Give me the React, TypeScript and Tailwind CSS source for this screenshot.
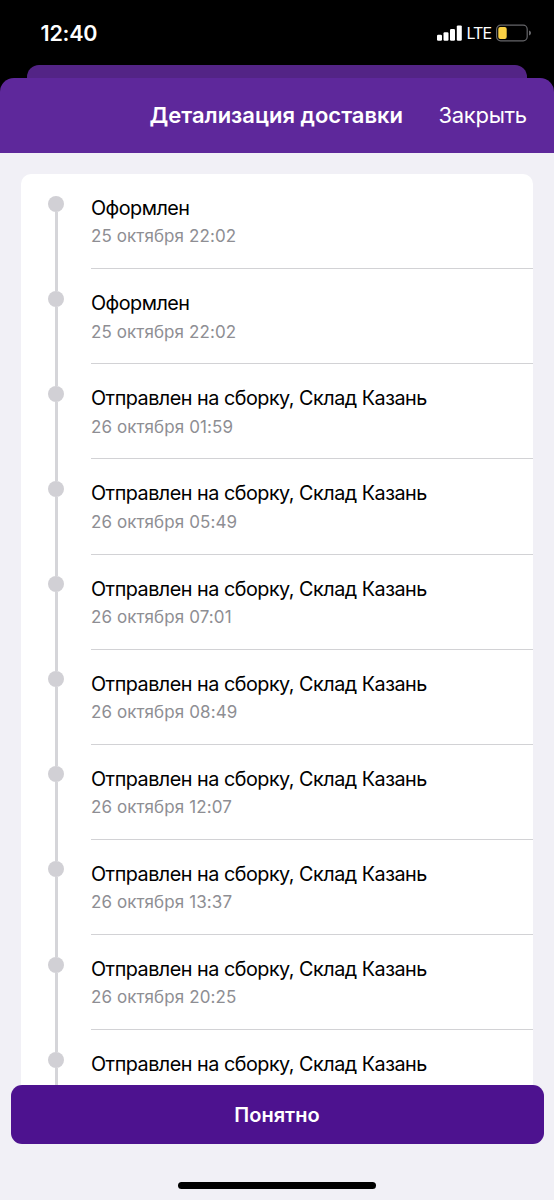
const steps = [
    { title: "Оформлен", date: "25 октября 22:02" },
    { title: "Оформлен", date: "25 октября 22:02" },
    { title: "Отправлен на сборку, Склад Казань", date: "26 октября 01:59" },
    { title: "Отправлен на сборку, Склад Казань", date: "26 октября 05:49" },
    { title: "Отправлен на сборку, Склад Казань", date: "26 октября 07:01" },
    { title: "Отправлен на сборку, Склад Казань", date: "26 октября 08:49" },
    { title: "Отправлен на сборку, Склад Казань", date: "26 октября 12:07" },
    { title: "Отправлен на сборку, Склад Казань", date: "26 октября 13:37" },
    { title: "Отправлен на сборку, Склад Казань", date: "26 октября 20:25" },
    { title: "Отправлен на сборку, Склад Казань", date: "" },
];

const StatusBar = () => {
    return (
        <div className="flex h-16 shrink-0 items-start justify-between pl-[40.5px] pr-[22.5px] text-white">
            <p className="mt-[20px] text-[21.5px] font-semibold leading-[27px] tracking-[-0.2px]">12:40</p>
            <div className="mt-[22px] flex h-[22px] items-center">
                <svg width="26" height="16" viewBox="0 0 26 16" fill="currentColor">
                    <rect x="0" y="9.8" width="5" height="6" rx="1.2" />
                    <rect x="6.5" y="7.2" width="5" height="8.6" rx="1.2" />
                    <rect x="13" y="4" width="5" height="11.8" rx="1.2" />
                    <rect x="19.8" y="0.4" width="5" height="15.4" rx="1.2" />
                </svg>
                <span className="ml-[3.5px] w-[25.5px] text-[16px] leading-[22px] tracking-[-0.9px]">LTE</span>
                <svg className="ml-[3.5px]" width="36" height="18" viewBox="0 0 36 18" fill="none">
                    <rect x="0.6" y="1.2" width="30.6" height="15.6" rx="4" stroke="#66666a" strokeWidth="1.2" />
                    <rect x="2.3" y="3" width="8.4" height="12" rx="2" fill="#fbd144" />
                    <path d="M33 6.6c1.4.4 2 1.3 2 2.4s-.6 2-2 2.4z" fill="#66666a" />
                </svg>
            </div>
        </div>
    );
};

const App = () => {
    return (
        <div className="flex h-[1200px] w-[554px] flex-col overflow-hidden bg-black font-['Inter','Liberation_Sans',sans-serif]">
            <StatusBar />

            {/* edge of the screen under the sheet */}
            <div className="mx-[27px] mt-[0.5px] h-[28px] shrink-0 rounded-t-[12px] bg-[#532486]" />

            <div className="relative -mt-[14.5px] flex flex-1 flex-col">
                <div className="flex h-[75px] shrink-0 items-center justify-end rounded-t-[14px] bg-[#5e289b] pb-[2px] pr-[27.5px] text-white">
                    <h1 className="w-[289px] whitespace-nowrap text-[22px] font-semibold leading-[28px]">Детализация доставки</h1>
                    <button className="w-[88px] whitespace-nowrap text-left text-[22px] leading-[28px] tracking-[-0.3px]">Закрыть</button>
                </div>

                <div className="flex flex-1 flex-col bg-[#f1f0f6]">
                    <div className="ml-[21.4px] mr-[21.4px] mt-[21px] h-[911px] shrink-0 overflow-hidden rounded-t-[10px] bg-white">
                        {steps.map((step, index) => (
                            <div key={index} className="flex h-[95.13px]">
                                <div className="flex w-[69.6px] shrink-0 flex-col items-center">
                                    <div className={index === 0 ? "h-[21.6px]" : "h-[21.6px] w-[3px] bg-[#d5d5d9]"} />
                                    <div className="size-4 shrink-0 rounded-full bg-[#d1d0d5]" />
                                    <div className="w-[3px] flex-1 bg-[#d5d5d9]" />
                                </div>
                                <div className="flex-1 border-b border-[#d2d2d5] pt-[21px]">
                                    <p className="whitespace-nowrap text-[19.8px] leading-[26px] tracking-[-0.5px] text-black">{step.title}</p>
                                    {step.date && (
                                        <p className="mt-[3.4px] whitespace-nowrap text-[17px] leading-[24px] tracking-[0.1px] text-[#8e8e93]">{step.date}</p>
                                    )}
                                </div>
                            </div>
                        ))}
                    </div>

                    <div className="flex flex-1 flex-col items-center">
                        <button className="h-[58.5px] w-[533px] rounded-[11px] bg-[#4d128f] pt-px text-[20px] font-semibold text-white">
                            Понятно
                        </button>
                        <div className="mt-[38px] h-[7px] w-[198px] rounded-full bg-black" />
                    </div>
                </div>
            </div>
        </div>
    );
};

export default App;
